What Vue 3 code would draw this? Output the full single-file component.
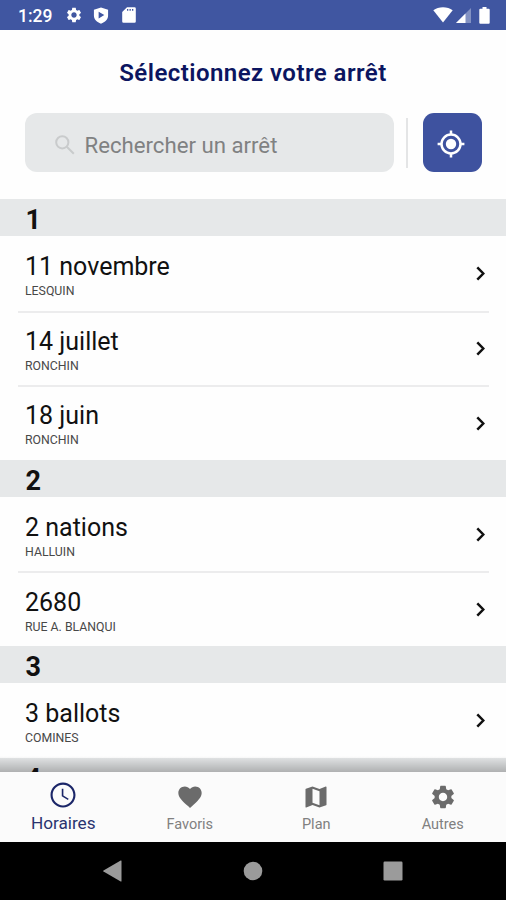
<script setup>
import { ref } from 'vue'

const search = ref('')
const activeTab = ref('Horaires')

const sections = [
  {
    key: '1',
    stops: [
      { name: '11 novembre', city: 'LESQUIN' },
      { name: '14 juillet', city: 'RONCHIN' },
      { name: '18 juin', city: 'RONCHIN' }
    ]
  },
  {
    key: '2',
    stops: [
      { name: '2 nations', city: 'HALLUIN' },
      { name: '2680', city: 'RUE A. BLANQUI' }
    ]
  },
  {
    key: '3',
    stops: [{ name: '3 ballots', city: 'COMINES' }]
  },
  { key: '4', stops: [] }
]

const gear =
  'M19.14 12.94c.04-.3.06-.61.06-.94 0-.32-.02-.64-.07-.94l2.03-1.58c.18-.14.23-.41.12-.61l-1.92-3.32c-.12-.22-.37-.29-.59-.22l-2.39.96c-.5-.38-1.03-.7-1.62-.94l-.36-2.54c-.04-.24-.24-.41-.48-.41h-3.84c-.24 0-.43.17-.47.41l-.36 2.54c-.59.24-1.13.57-1.62.94l-2.39-.96c-.22-.08-.47 0-.59.22L2.74 8.87c-.12.21-.08.47.12.61l2.03 1.58c-.05.3-.09.63-.09.94s.02.64.07.94l-2.03 1.58c-.18.14-.23.41-.12.61l1.92 3.32c.12.22.37.29.59.22l2.39-.96c.5.38 1.03.7 1.62.94l.36 2.54c.05.24.24.41.48.41h3.84c.24 0 .44-.17.47-.41l.36-2.54c.59-.24 1.13-.56 1.62-.94l2.39.96c.22.08.47 0 .59-.22l1.92-3.32c.12-.22.07-.47-.12-.61l-2.01-1.58zM12 15.6c-1.98 0-3.6-1.62-3.6-3.6s1.62-3.6 3.6-3.6 3.6 1.62 3.6 3.6-1.62 3.6-3.6 3.6z'

const tabs = [
  {
    label: 'Horaires',
    icon: 'M11.99 2C6.47 2 2 6.48 2 12s4.47 10 9.99 10C17.52 22 22 17.52 22 12S17.52 2 11.99 2zM12 20.3c-4.6 0-8.3-3.7-8.3-8.3S7.4 3.7 12 3.7s8.3 3.7 8.3 8.3-3.7 8.3-8.3 8.3zM12.3 7h-1.3v6l4.9 3 .65-1.1-4.25-2.6z'
  },
  {
    label: 'Favoris',
    icon: 'M12 21.35l-1.45-1.32C5.4 15.36 2 12.28 2 8.5 2 5.42 4.42 3 7.5 3c1.74 0 3.41.81 4.5 2.09C13.09 3.81 14.76 3 16.5 3 19.58 3 22 5.42 22 8.5c0 3.78-3.4 6.86-8.55 11.54L12 21.35z'
  },
  {
    label: 'Plan',
    icon: 'M20.5 3l-.16.03L15 5.1 9 3 3.36 4.9c-.21.07-.36.25-.36.48V20.5c0 .28.22.5.5.5l.16-.03L9 18.9l6 2.1 5.64-1.9c.21-.07.36-.25.36-.48V3.5c0-.28-.22-.5-.5-.5zM15 19l-6-2.11V5l6 2.11V19z'
  },
  { label: 'Autres', icon: gear }
]
</script>

<template>
  <div class="app">
    <header class="status-bar">
      <span class="time">1:29</span>
      <svg class="gear" viewBox="0 0 24 24"><path :d="gear" /></svg>
      <svg class="shield" viewBox="0 0 16 18">
        <path
          fill-rule="evenodd"
          d="M8 .5L15.5 3v6c0 4-3.2 7.200-7.500 8.700C3.700 16.200.5 13 .5 9V3zM5.500 5v7.200L11.500 8.600z"
        />
      </svg>
      <svg class="sd" viewBox="0 0 14 16">
        <path
          fill-rule="evenodd"
          d="M5 .3h7.500q1.300 0 1.300 1.300v12.800q0 1.300-1.300 1.300h-11q-1.300 0-1.300-1.300V5zM5 2v1.800h1.300V2zm2.500 0v1.800h1.300V2zM10 2v1.800h1.300V2z"
        />
      </svg>
      <span class="spacer"></span>
      <svg class="wifi" viewBox="0 0 20 16">
        <path d="M10 15.500L.3 3.300C3 1.300 6.300.3 10 .3s7 1 9.700 3z" />
      </svg>
      <svg class="signal" viewBox="0 0 15 15">
        <path d="M15 0v15H0z" opacity=".35" />
        <path d="M9.500 5.500V15H0z" />
      </svg>
      <svg class="battery" viewBox="0 0 11 17">
        <path d="M3.500 0h4v1.800h2.200q1 0 1 1v13q0 1-1 1H1.300q-1 0-1-1v-13q0-1 1-1h2.200z" />
      </svg>
    </header>

    <h1>Sélectionnez votre arrêt</h1>

    <div class="search-row">
      <label class="search">
        <svg viewBox="0 0 20 20">
          <circle cx="7.300" cy="7.300" r="6.100" />
          <path d="M11.800 11.800l7 7" />
        </svg>
        <input v-model="search" type="text" placeholder="Rechercher un arrêt" />
      </label>
      <span class="separator"></span>
      <button class="locate">
        <svg viewBox="0 0 28 28">
          <circle class="ring" cx="14" cy="14" r="9.500" />
          <circle cx="14" cy="14" r="5.200" />
          <path class="ring" d="M14 .6v4M14 23.400v4M.6 14h4M23.400 14h4" />
        </svg>
      </button>
    </div>

    <main class="list">
      <section v-for="section in sections" :key="section.key">
        <h2>{{ section.key }}</h2>
        <div v-for="stop in section.stops" :key="stop.name" class="stop">
          <div class="text">
            <div class="name">{{ stop.name }}</div>
            <div class="city">{{ stop.city }}</div>
          </div>
          <svg class="chevron" viewBox="0 0 9 15">
            <path d="M1.300 1.300L7.300 7.500l-6 6.200" />
          </svg>
        </div>
      </section>
      <div class="shade"></div>
    </main>

    <nav class="tabs">
      <button
        v-for="tab in tabs"
        :key="tab.label"
        class="tab"
        :class="{ active: activeTab === tab.label }"
        @click="activeTab = tab.label"
      >
        <svg viewBox="0 0 24 24"><path :d="tab.icon" /></svg>
        <span>{{ tab.label }}</span>
      </button>
    </nav>

    <footer class="system-nav">
      <svg viewBox="0 0 22 22"><path d="M19.500 1v20q0 .8-.8.4L1.500 11.600q-.8-.6 0-1.200L18.700.6q.8-.4.8.4z" /></svg>
      <svg viewBox="0 0 22 22"><circle cx="11" cy="11" r="9.300" /></svg>
      <svg viewBox="0 0 22 22"><rect x="1.500" y="1.500" width="19" height="19" rx="1.200" /></svg>
    </footer>
  </div>
</template>

<style>
body {
  margin: 0;
}
</style>

<style scoped>
.app {
  display: flex;
  flex-direction: column;
  width: 506px;
  height: 900px;
  overflow: hidden;
  background: #fefefe;
  font-family: Roboto, sans-serif;
  color: #111;
}
.status-bar {
  flex: none;
  display: flex;
  align-items: center;
  height: 29.5px;
  padding: 1px 16px 0 18px;
  box-sizing: border-box;
  background: #4056a1;
  color: #fff;
  fill: #fff;
}
.time {
  width: 47px;
  padding-top: 2px;
  font-size: 17.5px;
  font-weight: 500;
  line-height: 26px;
}
.gear {
  width: 18px;
  height: 18px;
}
.shield {
  width: 16px;
  height: 17px;
  margin-left: 10px;
}
.sd {
  width: 14px;
  height: 16px;
  margin-left: 13px;
}
.spacer {
  flex: 1;
}
.wifi {
  width: 20px;
  height: 16px;
}
.signal {
  width: 15px;
  height: 15px;
  margin-left: 3px;
}
.battery {
  width: 11px;
  height: 17px;
  margin-left: 8px;
}
h1 {
  flex: none;
  margin: 28.5px 0 0;
  text-align: center;
  font-size: 24px;
  font-weight: 600;
  letter-spacing: 0.45px;
  line-height: 30px;
  color: #0b1560;
}
.search-row {
  flex: none;
  display: flex;
  align-items: center;
  height: 59px;
  margin: 25px 24px 27px 25px;
}
.search {
  display: flex;
  align-items: center;
  width: 369px;
  height: 59px;
  padding-left: 30px;
  box-sizing: border-box;
  border-radius: 12px;
  background: #e6e8e9;
}
.search svg {
  width: 20px;
  height: 20px;
  margin-top: 4px;
  fill: none;
  stroke: #c9cbcc;
  stroke-width: 2;
}
.search input {
  width: 280px;
  margin-left: 9.5px;
  padding: 4px 0 0;
  border: 0;
  outline: 0;
  background: none;
  font: 22.2px Roboto, sans-serif;
}
.search input::placeholder {
  color: #808182;
  opacity: 1;
}
.separator {
  width: 2px;
  height: 50px;
  margin: 0 15px 0 12px;
  background: #e4e5e6;
}
.locate {
  display: flex;
  align-items: center;
  justify-content: center;
  width: 59px;
  height: 59px;
  padding: 0 3px 0 0;
  border: 0;
  border-radius: 11px;
  background: #3e529f;
}
.locate svg {
  width: 28px;
  height: 28px;
  margin-top: 3px;
  fill: #fff;
}
.locate .ring {
  fill: none;
  stroke: #fff;
  stroke-width: 2.5;
}
.list {
  position: relative;
  flex: 1;
  min-height: 0;
  overflow: hidden;
}
h2 {
  height: 37px;
  margin: 0;
  padding: 3px 25.5px 0;
  box-sizing: border-box;
  background: #e6e8e9;
  font-size: 27px;
  font-weight: 700;
  line-height: 36px;
}
.stop {
  display: flex;
  align-items: center;
  justify-content: space-between;
  height: 74.6px;
  margin: 0 17px 0 18px;
  padding: 0 4px 0 7px;
  box-sizing: border-box;
}
.stop + .stop {
  border-top: 2px solid #ececed;
}
.text {
  padding-top: 5px;
}
.stop + .stop .text {
  padding-top: 3px;
}
.name {
  font-size: 25px;
  line-height: 30px;
}
.city {
  margin-top: 1px;
  font-size: 12.3px;
  line-height: 16px;
  color: #484848;
}
.chevron {
  width: 9px;
  height: 15px;
  fill: none;
  stroke: #111;
  stroke-width: 2.5;
}
.shade {
  position: absolute;
  left: 0;
  right: 0;
  bottom: 0;
  height: 16px;
  background: linear-gradient(rgba(0, 0, 0, 0), rgba(0, 0, 0, 0.24));
}
.tabs {
  flex: none;
  display: flex;
  height: 70px;
  background: #fbfbfb;
}
.tab {
  flex: 1;
  display: flex;
  flex-direction: column;
  align-items: center;
  padding: 11px 0 0;
  border: 0;
  background: none;
  font: 14.5px/18px Roboto, sans-serif;
  color: #808080;
}
.tab svg {
  width: 28px;
  height: 28px;
  fill: #6b6b6b;
}
.tab span {
  margin-top: 5px;
}
.tab.active {
  padding-top: 8px;
  font-size: 17.2px;
  color: #2a3470;
}
.tab.active svg {
  width: 30px;
  height: 30px;
  fill: #1b2668;
}
.tab.active span {
  margin-top: 4px;
}
.system-nav {
  flex: none;
  display: flex;
  align-items: center;
  justify-content: center;
  gap: 118px;
  height: 58px;
  background: #000;
  fill: #9b9b9b;
}
.system-nav svg {
  width: 22px;
  height: 22px;
}
</style>
